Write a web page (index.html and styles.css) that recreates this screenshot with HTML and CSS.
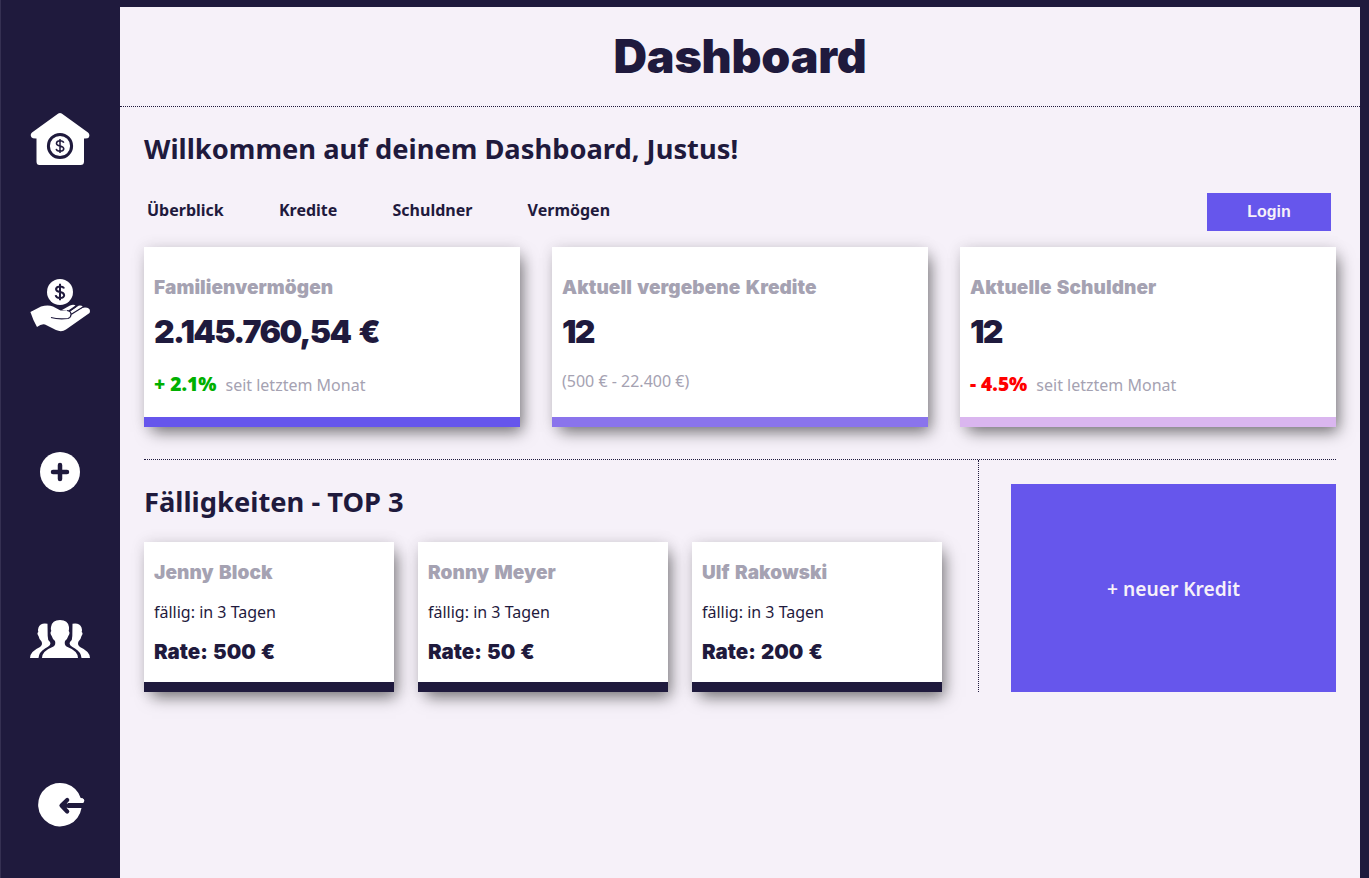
FILE: index.html
```
<!DOCTYPE html>
<html lang="de">
<head>
<meta charset="utf-8">
<title>Dashboard</title>
<link rel="stylesheet" href="styles.css">
</head>
<body>
<div class="app">
  <aside class="sidebar">
    <a class="side-link"><svg width="60" height="60" viewBox="0 -1 60 60"><path d="M28.3 3.6Q30 2.3 31.700 3.6L58 22.500Q60.300 24.600 58.800 27.500Q58 28.700 54 28.500V51.500Q54 55 50.500 55H9.500Q6.500 55 6.500 51.500V28.500Q2.500 28.700 1.400 27.200Q-.2 24.500 2 22.500Z" fill="#fff"/><circle cx="30" cy="36" r="11.600" fill="none" stroke="#1f1a3d" stroke-width="3"/><path d="M33.700 32.800Q33.200 30.800 30 30.800T26.400 33.300Q26.500 35.500 30 36T33.800 38.900Q33.500 41.200 30 41.200T26.200 38.900M30 29V43" fill="none" stroke="#1f1a3d" stroke-width="1.500"/></svg></a>
    <a class="side-link"><svg width="60" height="60" viewBox="0 1 60 60"><circle cx="30" cy="17" r="13" fill="#fff"/><path d="M34 13.500Q33.300 11.500 30 11.500T26 14Q26.200 16.500 30 17T34.200 20.300Q34 23 30 23T25.700 20.200M30 8.800V25.300" fill="none" stroke="#1f1a3d" stroke-width="2"/><path d="M.4 37L11 31.500Q18 29.500 23 31.500L30.500 35.500H37Q41 36 41 39.500Q50 32.500 55 32.500Q61.500 33 59.500 38L36 54.500Q31.500 57.500 26 55L15 49.500Q11.500 48.500 7 52Q3 45 .4 37Z" fill="#fff"/><path d="M32 35L40 30.500Q43.500 29 45.500 30.500L38 35.700Z" fill="#fff"/><path d="M40 36.500L48.500 30.700Q51.500 30 53 32L41.500 39Z" fill="#fff"/><path d="M21 42.500Q28 44.500 38 43.500Q41 42.500 41 39.500Q41 36 37 35.500M39 36.500L46 31.500M41 39.500L53 32" fill="none" stroke="#1f1a3d" stroke-width="1.200"/></svg></a>
    <a class="side-link"><svg width="60" height="60" viewBox="0 0 60 60"><circle cx="30" cy="30" r="20" fill="#fff"/><path d="M30 23V37M23 30H37" stroke="#1f1a3d" stroke-width="4.500" stroke-linecap="round"/></svg></a>
    <a class="side-link"><svg width="60" height="60" viewBox="0 0 60 60"><g fill="#fff"><path id="side-person" d="M17.500 14.800Q10.500 13.500 8.500 18.500Q7.700 20.500 8.300 23Q6.500 24 8.500 27Q9 30 11.500 32.500Q13 35.500 10 38Q0 42.500 0 49H8.500Q9 43 15 39.500Q22 36 20 33Q17.500 31 17.700 27Z"/><use href="#side-person" transform="matrix(-1 0 0 1 60 0)"/><path d="M30 11Q38 11 39 18Q39.200 20 38.700 22Q40.500 24 38.300 27Q37.500 30 35 32Q34 35.500 36.500 37.500Q48 42 48 49H12Q12 42 23.500 37.500Q26 35.500 25 32Q22.500 30 21.700 27Q19.500 24 21.300 22Q20.500 20 21 18Q22 11 30 11Z"/></g></svg></a>
    <a class="side-link"><svg width="60" height="60" viewBox="0 -1 60 60"><path d="M50.700 22A21.800 21.800 0 1 0 51.500 32H38V27H52.500Q54.500 26.500 54.200 24.300Q53.500 22 50.700 22Z" fill="#fff"/><path d="M37.200 24L31.500 29.600L37.200 35.500M32 29.600H54" fill="none" stroke="#1f1a3d" stroke-width="4.200" stroke-linecap="round" stroke-linejoin="round"/><path d="M50 22.500H52.500Q54.400 23 54.200 25Q53.800 27 52 27H50Z" fill="#fff"/></svg></a>
  </aside>
  <main class="main">
    <header class="header"><h1 class="title">Dashboard</h1></header>
    <div class="content">
      <h2 class="heading">Willkommen auf deinem Dashboard, Justus!</h2>
      <div class="topbar">
        <nav class="nav"><a>Überblick</a><a>Kredite</a><a>Schuldner</a><a>Vermögen</a></nav>
        <button class="login">Login</button>
      </div>
      <section class="stats">
        <article class="card stat stat-wealth"><h3 class="label">Familienvermögen</h3><p class="value">2.145.760,54 €</p><p class="note"><b class="change up">+ 2.1%</b>seit letztem Monat</p></article>
        <article class="card stat stat-loans"><h3 class="label">Aktuell vergebene Kredite</h3><p class="value">12</p><p class="note range">(500 € - 22.400 €)</p></article>
        <article class="card stat stat-debtors"><h3 class="label">Aktuelle Schuldner</h3><p class="value">12</p><p class="note"><b class="change down">- 4.5%</b>seit letztem Monat</p></article>
      </section>
      <section class="lower">
        <div class="due">
          <h2 class="heading">Fälligkeiten - TOP 3</h2>
          <div class="due-cards">
            <article class="card due-card"><h3 class="label">Jenny Block</h3><p class="when">fällig: in 3 Tagen</p><p class="rate">Rate: 500 €</p></article>
            <article class="card due-card"><h3 class="label">Ronny Meyer</h3><p class="when">fällig: in 3 Tagen</p><p class="rate">Rate: 50 €</p></article>
            <article class="card due-card"><h3 class="label">Ulf Rakowski</h3><p class="when">fällig: in 3 Tagen</p><p class="rate">Rate: 200 €</p></article>
          </div>
        </div>
        <button class="new-loan">+ neuer Kredit</button>
      </section>
    </div>
  </main>
</div>
</body>
</html>
```
FILE: styles.css
```
* { box-sizing: border-box; margin: 0; padding: 0; }
body { font-family: "Noto Sans", sans-serif; font-size: 16px; color: #1f1a3d; background: #1f1a3d; overflow: hidden; }
.app { display: flex; height: 878px; padding: 7px 9px 0 0; }
.sidebar { width: 120px; margin-top: -7px; border-left: 1px solid #353052; display: flex; flex-direction: column; align-items: center; padding: 109px 1px 0 0; gap: 106.5px; }
.side-link { height: 60px; flex: none; }
.side-link svg { display: block; }
.main { flex: 1; background: #f6f1f9; }
.header { height: 100px; border-bottom: 1px dotted #1f1a3d; display: flex; justify-content: center; align-items: center; padding-bottom: 1px; }
.title, .label, .value, .rate { font-family: Inter, sans-serif; font-weight: 900; }
.title { font-size: 46.500px; line-height: 56px; letter-spacing: -.2px; }
.content { padding: 24px 24px 0; }
.heading { font-size: 27.300px; line-height: 36px; font-weight: 700; white-space: nowrap; }
.topbar { display: flex; justify-content: space-between; margin-top: 26px; padding: 0 5px 0 3px; height: 38px; }
.nav { display: flex; gap: 55.200px; font-weight: 700; line-height: 34px; }
.login { width: 124px; border: 0; background: #6656ec; color: #f6f1f9; font: bold 16px "Liberation Sans", sans-serif; }
.stats { display: grid; grid-template-columns: repeat(3, 376px); gap: 32px; margin-top: 16px; padding-bottom: 32px; }
.card { background: #fff; padding: 0 10px; box-shadow: 0 0 14px rgba(0,0,0,.1), 5px 8px 15px -3px rgba(0,0,0,.5); border-bottom: 10px solid #1f1a3d; }
.stat { height: 180px; padding-top: 29px; }
.stat-wealth { border-color: #6656ec; }
.stat-loans { border-color: #8a74ec; }
.stat-debtors { border-color: #dab6ef; }
.label { color: #a5a2b2; font-size: 19px; line-height: 24px; word-spacing: 1.500px; letter-spacing: .08px; }
.value { font-size: 32px; line-height: 40px; margin-top: 12px; letter-spacing: -1.600px; word-spacing: 3px; }
.note { color: #a5a2b2; line-height: 26px; margin-top: 19px; }
.range { margin-top: 16px; }
.change { font-size: 19.200px; font-weight: 900; margin-right: 9px; }
.up { color: #00b000; }
.down { color: #f00; }
.lower { border-top: 1px dotted #1f1a3d; display: flex; }
.due { width: 835px; border-right: 1px dotted #1f1a3d; padding-top: 24px; }
.due-cards { display: grid; grid-template-columns: repeat(3, 250px); gap: 24px; margin-top: 22px; }
.due-card { height: 150px; padding-top: 19px; }
.when { line-height: 24px; margin-top: 15px; }
.rate { font-size: 20.500px; line-height: 26px; margin-top: 15px; word-spacing: 1px; }
.new-loan { flex: 1; margin: 24px 0 0 32px; background: #6656ec; color: #f6f1f9; border: 0; font: 600 19.200px "Noto Sans", sans-serif; }
```
